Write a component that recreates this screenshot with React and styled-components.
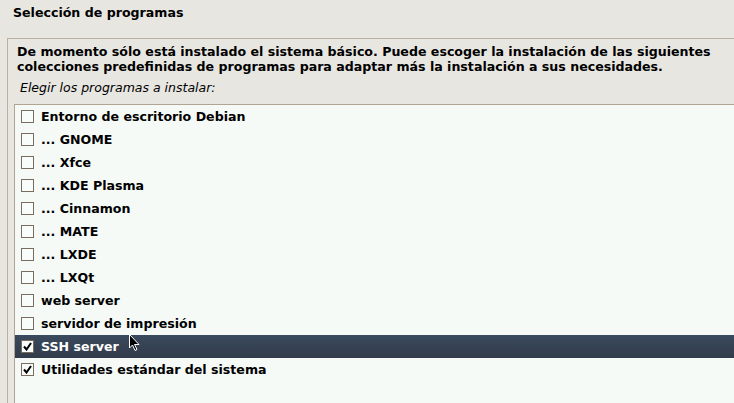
import React from 'react';
import styled, { createGlobalStyle } from 'styled-components';

const GlobalStyle = createGlobalStyle`
  html, body {
    margin: 0;
    padding: 0;
    background: #e8e6e1;
    overflow: hidden;
  }
  body {
    font-family: "DejaVu Sans", "Liberation Sans", sans-serif;
    color: #000;
  }
`;

const Page = styled.div`
  width: 734px;
  height: 403px;
  display: flex;
  flex-direction: column;
  background: #e8e6e1;
  position: relative;
`;

const Header = styled.div`
  height: 38px;
  padding: 5px 0 0 13px;
  box-sizing: border-box;
  font-size: 12.6px;
  font-weight: bold;
  line-height: 16px;
`;

const Frame = styled.div`
  flex: 1;
  margin-left: 7px;
  border-top: 1px solid #b9b09f;
  border-left: 1px solid #b9b09f;
  padding: 5px 0 0 6px;
  display: flex;
  flex-direction: column;
`;

const Description = styled.p`
  margin: 0 0 0 3px;
  font-size: 12.6px;
  font-weight: bold;
  line-height: 15px;
  white-space: nowrap;
`;

const Prompt = styled.div`
  margin: 5px 0 0 6px;
  font-size: 12.5px;
  font-style: italic;
  line-height: 17px;
  height: 25px;
  flex-shrink: 0;
`;

const ListBox = styled.ul`
  flex: 1;
  list-style: none;
  margin: 0;
  padding: 0;
  background: #f5faf7;
  border-top: 1px solid #b0a593;
  border-left: 1px solid #b0a593;
`;

const Row = styled.li`
  height: 23px;
  display: flex;
  align-items: center;
  gap: 7px;
  padding-left: 6px;
  font-size: 12.6px;
  font-weight: bold;
  color: ${(p) => (p.$selected ? '#ffffff' : '#000')};
  background: ${(p) =>
    p.$selected ? 'linear-gradient(#3a4a5e, #323b4a)' : 'transparent'};
`;

const Box = styled.span`
  width: 11px;
  height: 11px;
  border: 1px solid #7b6d5e;
  background: #f8fcfa;
  display: flex;
  align-items: center;
  justify-content: center;
  flex-shrink: 0;
`;

const Cursor = styled.svg`
  position: absolute;
  left: 129px;
  top: 334px;
`;

const items = [
  { label: 'Entorno de escritorio Debian', checked: false },
  { label: '... GNOME', checked: false },
  { label: '... Xfce', checked: false },
  { label: '... KDE Plasma', checked: false },
  { label: '... Cinnamon', checked: false },
  { label: '... MATE', checked: false },
  { label: '... LXDE', checked: false },
  { label: '... LXQt', checked: false },
  { label: 'web server', checked: false },
  { label: 'servidor de impresión', checked: false },
  { label: 'SSH server', checked: true, selected: true },
  { label: 'Utilidades estándar del sistema', checked: true },
];

const Check = () => (
  <svg width="9" height="9" viewBox="0 0 9 9">
    <path d="M1 4.5 L3.5 7.5 L8 1" fill="none" stroke="#000" strokeWidth="2" />
  </svg>
);

const App = () => (
  <Page>
    <GlobalStyle />
    <Header>Selección de programas</Header>
    <Frame>
      <Description>
        De momento sólo está instalado el sistema básico. Puede escoger la instalación de las siguientes
        <br />
        colecciones predefinidas de programas para adaptar más la instalación a sus necesidades.
      </Description>
      <Prompt>Elegir los programas a instalar:</Prompt>
      <ListBox>
        {items.map((it) => (
          <Row key={it.label} $selected={it.selected}>
            <Box>{it.checked && <Check />}</Box>
            {it.label}
          </Row>
        ))}
      </ListBox>
    </Frame>
    <Cursor width="12" height="18" viewBox="0 0 12 18">
      <path d="M0.5 0.5 L0.5 14 L3.5 11 L6 16.5 L8 15.5 L5.5 10.5 L10 10.5 Z" fill="#000" stroke="#fff" strokeWidth="1" />
    </Cursor>
  </Page>
);

export default App;
